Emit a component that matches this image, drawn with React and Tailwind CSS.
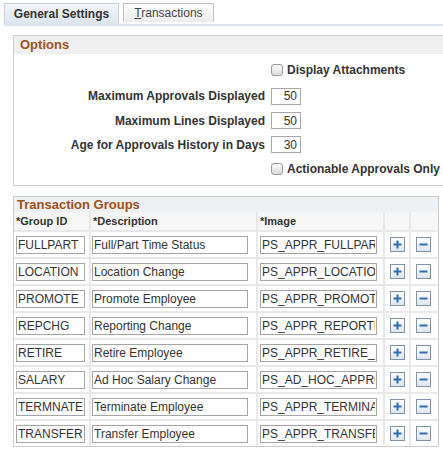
import React from "react";

const rows = [
  ["FULLPART", "Full/Part Time Status", "PS_APPR_FULLPART"],
  ["LOCATION", "Location Change", "PS_APPR_LOCATION"],
  ["PROMOTE", "Promote Employee", "PS_APPR_PROMOTE"],
  ["REPCHG", "Reporting Change", "PS_APPR_REPORTING"],
  ["RETIRE", "Retire Employee", "PS_APPR_RETIRE_EE"],
  ["SALARY", "Ad Hoc Salary Change", "PS_AD_HOC_APPROVAL"],
  ["TERMNATE", "Terminate Employee", "PS_APPR_TERMINATION"],
  ["TRANSFER", "Transfer Employee", "PS_APPR_TRANSFER"],
];

const Checkbox = () => (
  <span className="inline-block w-[12px] h-[12px] rounded-[3px] border border-[#9a9a9a] bg-gradient-to-b from-[#fafafa] to-[#dcdcdc]" />
);

const NumField = ({ value }) => (
  <input
    readOnly
    value={value}
    className="w-[30px] h-[17px] border border-[#a9a9a9] bg-white text-right pr-[3px] text-[12px] text-[#333] outline-none"
  />
);

const TextField = ({ value, w }) => (
  <input
    readOnly
    value={value}
    className={`${w} h-[18px] border border-[#a5a5a5] bg-white px-[1px] text-[12px] text-[#333] outline-none`}
  />
);

const GridButton = ({ minus }) => (
  <button className="w-[15px] h-[15px] border border-[#7f94a8] bg-gradient-to-b from-[#ffffff] to-[#dfe6ee] flex items-center justify-center">
    <svg width="9" height="9" viewBox="0 0 9 9">
      <rect x="0.5" y="3.5" width="8" height="2" fill="#2f6cb0" />
      {!minus && <rect x="3.5" y="0.5" width="2" height="8" fill="#2f6cb0" />}
    </svg>
  </button>
);

// label column is right aligned, field starts at x=271
const OptionRow = ({ h, label, children }) => (
  <div className={`flex items-center ${h}`}>
    <div className="w-[257px] pr-[6px] text-right text-[12px] font-bold text-[#333] whitespace-nowrap">
      {label}
    </div>
    {children}
  </div>
);

export default function App() {
  return (
    <div
      className="w-[443px] h-[452px] bg-white overflow-hidden"
      style={{ fontFamily: '"Liberation Sans", Arial, sans-serif' }}
    >
      {/* Tabs */}
      <div className="flex items-end gap-[4px] pl-[4px] pt-[3px]">
        <div className="w-[115px] h-[21px] border border-b-0 border-[#c3d0dd] bg-gradient-to-b from-[#f3f6fa] to-[#dce5ef] flex items-center justify-center text-[12px] font-bold text-[#333]">
          General Settings
        </div>
        <div className="w-[91px] h-[19px] mb-[2px] border border-b-0 border-[#bfbfbf] bg-gradient-to-b from-[#ffffff] to-[#ececec] flex items-center justify-center text-[12px] text-[#444]">
          <span>
            <span className="underline">T</span>ransactions
          </span>
        </div>
      </div>
      <div className="ml-[4px] h-[2px] bg-[#dce5ef]" />

      {/* Options */}
      <div className="ml-[13px] mt-[9px] w-[440px] border border-[#cccccc]">
        <div className="h-[18px] bg-[#f0f0f0] pl-[6px] flex items-center text-[13px] font-bold text-[#a0501a]">
          Options
        </div>
        <div className="pt-[3px] pb-[4px]">
          <OptionRow h="h-[26px]" label="">
            <Checkbox />
            <span className="ml-[4px] text-[12px] font-bold text-[#333]">Display Attachments</span>
          </OptionRow>
          <OptionRow h="h-[26px]" label="Maximum Approvals Displayed">
            <NumField value="50" />
          </OptionRow>
          <OptionRow h="h-[23px]" label="Maximum Lines Displayed">
            <NumField value="50" />
          </OptionRow>
          <OptionRow h="h-[25px]" label="Age for Approvals History in Days">
            <NumField value="30" />
          </OptionRow>
          <OptionRow h="h-[24px]" label="">
            <Checkbox />
            <span className="ml-[4px] text-[12px] font-bold text-[#333] whitespace-nowrap">Actionable Approvals Only</span>
          </OptionRow>
        </div>
      </div>

      {/* Transaction Groups */}
      <div className="ml-[13px] mt-[10px] w-[426px] border border-[#cccccc] bg-[#e8e8e8]">
        <div className="h-[15px] bg-[#eef1f3] pl-[3px] flex items-center text-[13px] font-bold text-[#a0501a]">
          Transaction Groups
        </div>
        <div className="grid grid-cols-[75px_165px_125px_24px_27px] gap-[2px]">
          <div className="h-[18px] bg-[#f7f6f6] pl-[2px] flex items-center text-[11px] font-bold text-[#333]">*Group ID</div>
          <div className="h-[18px] bg-[#f7f6f6] pl-[2px] flex items-center text-[11px] font-bold text-[#333]">*Description</div>
          <div className="h-[18px] bg-[#f7f6f6] pl-[2px] flex items-center text-[11px] font-bold text-[#333]">*Image</div>
          <div className="h-[18px] bg-[#f7f6f6]" />
          <div className="h-[18px] bg-[#f7f6f6]" />
          {rows.map(([id, desc, img]) => (
            <React.Fragment key={id}>
              <div className="h-[25px] bg-white pl-[2px] flex items-center">
                <TextField value={id} w="w-[69px]" />
              </div>
              <div className="h-[25px] bg-white pl-[1px] flex items-center">
                <TextField value={desc} w="w-[156px]" />
              </div>
              <div className="h-[25px] bg-white pl-[2px] flex items-center">
                <TextField value={img} w="w-[117px]" />
              </div>
              <div className="h-[25px] bg-white pl-[5px] flex items-center">
                <GridButton />
              </div>
              <div className="h-[25px] bg-white pl-[5px] flex items-center">
                <GridButton minus />
              </div>
            </React.Fragment>
          ))}
        </div>
      </div>
    </div>
  );
}
